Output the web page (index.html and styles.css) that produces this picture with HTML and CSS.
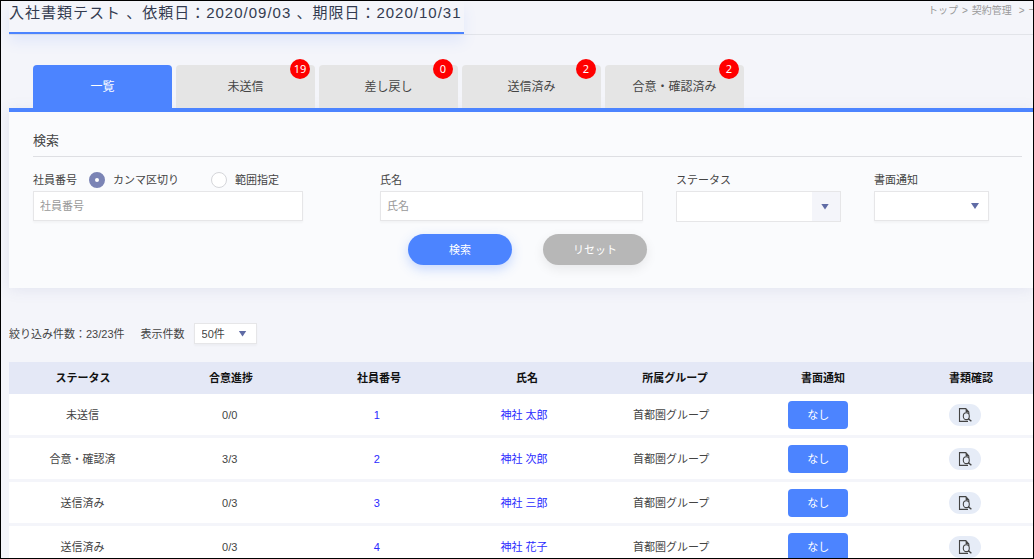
FILE: index.html
```html
<!DOCTYPE html>
<html lang="ja">
<head>
<meta charset="utf-8">
<title>入社書類テスト</title>
<link rel="stylesheet" href="styles.css">
</head>
<body>
<svg class="sprite" aria-hidden="true">
  <symbol id="doc-search" viewBox="0 0 14 14">
    <path d="M10 13.4H1.5V.6h6.3L10.8 4v2" fill="none" stroke="currentColor" stroke-width="1.1"/>
    <path d="M7.6.6l3.4 3.6H7.6z" fill="currentColor"/>
    <ellipse cx="8.3" cy="8.2" rx="3" ry="3.4" fill="none" stroke="currentColor" stroke-width="1.1"/>
    <path d="M10.2 10.6l3.2 2.6" stroke="currentColor" stroke-width="1.4"/>
  </symbol>
</svg>
<header class="page-header">
  <h1 class="page-title">入社書類テスト 、依頼日：2020/09/03 、期限日：2020/10/31</h1>
  <nav class="breadcrumb" aria-label="パンくず"><a href="#">トップ</a><span>&gt;</span><a href="#">契約管理</a><span class="deeper">&gt;</span><span>一</span></nav>
</header>
<main>
  <nav class="tabs" aria-label="表示切替">
    <button class="tab tab-active" type="button">一覧</button>
    <button class="tab" type="button">未送信<span class="badge">19</span></button>
    <button class="tab" type="button">差し戻し<span class="badge">0</span></button>
    <button class="tab" type="button">送信済み<span class="badge">2</span></button>
    <button class="tab" type="button">合意・確認済み<span class="badge">2</span></button>
  </nav>
  <form class="search-card">
    <h2 class="search-heading">検索</h2>
    <div class="fields">
      <div class="field field-number">
        <div class="label-row">
          <label for="emp-no">社員番号</label>
          <label class="choice"><input class="radio" type="radio" name="mode" checked>カンマ区切り</label>
          <label class="choice choice-range"><input class="radio" type="radio" name="mode">範囲指定</label>
        </div>
        <input class="control" id="emp-no" type="text" placeholder="社員番号">
      </div>
      <div class="field">
        <div class="label-row"><label for="emp-name">氏名</label></div>
        <input class="control" id="emp-name" type="text" placeholder="氏名">
      </div>
      <div class="field">
        <div class="label-row"><label for="status">ステータス</label></div>
        <div class="select select-multi"><select class="control" id="status"><option></option></select><span class="arrow"></span></div>
      </div>
      <div class="field">
        <div class="label-row"><label for="notice">書面通知</label></div>
        <div class="select"><select class="control" id="notice"><option></option></select><span class="arrow"></span></div>
      </div>
    </div>
    <div class="actions">
      <button class="pill pill-primary" type="submit">検索</button>
      <button class="pill pill-reset" type="reset">リセット</button>
    </div>
  </form>
  <div class="list-bar">
    <span>絞り込み件数：23/23件</span>
    <label class="page-size" for="size">表示件数</label>
    <div class="select select-small"><select class="control" id="size"><option>50件</option></select><span class="arrow"></span></div>
  </div>
  <table class="list">
    <thead>
      <tr><th>ステータス</th><th>合意進捗</th><th>社員番号</th><th>氏名</th><th>所属グループ</th><th>書面通知</th><th>書類確認</th></tr>
    </thead>
    <tbody>
      <tr><td>未送信</td><td>0/0</td><td><a href="#">1</a></td><td><a href="#">神社 太郎</a></td><td>首都圏グループ</td><td><button class="notice" type="button">なし</button></td><td><button class="doc" type="button" aria-label="書類確認"><svg class="doc-icon"><use href="#doc-search"/></svg></button></td></tr>
      <tr><td>合意・確認済</td><td>3/3</td><td><a href="#">2</a></td><td><a href="#">神社 次郎</a></td><td>首都圏グループ</td><td><button class="notice" type="button">なし</button></td><td><button class="doc" type="button" aria-label="書類確認"><svg class="doc-icon"><use href="#doc-search"/></svg></button></td></tr>
      <tr><td>送信済み</td><td>0/3</td><td><a href="#">3</a></td><td><a href="#">神社 三郎</a></td><td>首都圏グループ</td><td><button class="notice" type="button">なし</button></td><td><button class="doc" type="button" aria-label="書類確認"><svg class="doc-icon"><use href="#doc-search"/></svg></button></td></tr>
      <tr><td>送信済み</td><td>0/3</td><td><a href="#">4</a></td><td><a href="#">神社 花子</a></td><td>首都圏グループ</td><td><button class="notice" type="button">なし</button></td><td><button class="doc" type="button" aria-label="書類確認"><svg class="doc-icon"><use href="#doc-search"/></svg></button></td></tr>
    </tbody>
  </table>
</main>
</body>
</html>
```
FILE: styles.css
```css
* { box-sizing: border-box; }

body {
  margin: 0;
  height: 100vh;
  padding-left: 8px;
  overflow: hidden;
  border: 1px solid #000;
  background: #f4f5fa;
  color: #444;
  font: 11px/18px "Liberation Sans", "Noto Sans CJK JP", sans-serif;
}

button, input, select { font: inherit; color: inherit; margin: 0; }
button { padding: 0; border: 0; cursor: pointer; }
a { color: inherit; text-decoration: none; }

.sprite { display: none; }

.page-header {
  display: flex;
  justify-content: space-between;
  border-bottom: 1px solid #e2e4e9;
}

.page-title {
  margin: 0;
  padding: 2px 3px 9px 0;
  border-bottom: 2px solid #4c84ff;
  box-shadow: 0 8px 14px rgba(76, 132, 255, 0.1);
  color: #333b50;
  font-size: 15px;
  font-weight: 400;
  line-height: 20px;
  letter-spacing: 1px;
  white-space: nowrap;
}

.breadcrumb {
  display: flex;
  flex: 0 0 105px;
  gap: 4px;
  overflow: hidden;
  color: #999;
  font-size: 10px;
  line-height: 20px;
  white-space: nowrap;
}

.deeper { padding-left: 3px; }

.tabs {
  display: flex;
  gap: 4px;
  margin-top: 30px;
  padding-left: 24px;
}

.tab {
  position: relative;
  width: 139px;
  height: 43px;
  border-radius: 4px 4px 0 0;
  background: #e5e5e5;
  color: #444;
  font-size: 12px;
}

.tab-active { background: #4c84ff; color: #fff; }

.badge {
  position: absolute;
  top: -6px;
  right: 5px;
  width: 20px;
  border-radius: 10px;
  background: #f00;
  color: #fff;
  font: 11px/20px "Noto Sans", sans-serif;
}

.search-card {
  padding: 19px 11px 23px 24px;
  border-top: 4px solid #4c84ff;
  background: #fafbfd;
  box-shadow: 0 2px 14px rgba(80, 90, 160, 0.1);
}

.search-heading {
  margin: 0 0 14px;
  padding-bottom: 5px;
  border-bottom: 1px solid #dedfe3;
  font-size: 13px;
  font-weight: 400;
  line-height: 20px;
}

.fields {
  display: grid;
  grid-template-columns: 347fr 296fr 198fr 148fr;
}

.field { padding-right: 33px; }
.field-number { padding-right: 77px; }

.label-row {
  display: flex;
  align-items: center;
  height: 18px;
  margin-bottom: 2px;
  white-space: nowrap;
}

.choice {
  display: flex;
  align-items: center;
  gap: 8px;
  margin-left: 12px;
}

.choice-range { margin-left: 32px; }

.radio {
  appearance: none;
  width: 16px;
  height: 16px;
  border: 1px solid #d5d6da;
  border-radius: 50%;
  background: #fff;
}

.radio:checked {
  border: 6px solid #7b84b5;
}

.control {
  appearance: none;
  display: block;
  width: 100%;
  height: 30px;
  padding: 0 6px;
  border: 1px solid #e6e6e8;
  border-radius: 0;
  outline: 0;
  background: #fff;
  box-shadow: 0 2px 2px rgba(0, 0, 0, 0.03);
}

.control::placeholder { color: #999; opacity: 1; }

.select { display: grid; }
.select > * { grid-area: 1 / 1; }

.arrow {
  place-self: center end;
  width: 8px;
  height: 6px;
  margin-right: 10px;
  background: #5f6ba5;
  clip-path: polygon(0 0, 100% 0, 50% 100%);
  pointer-events: none;
}

.select-multi .control {
  height: 31px;
  background: linear-gradient(to left, #f4f5fa 28px, #fff 28px);
  box-shadow: none;
}

.select-multi .arrow { margin-right: 12px; }

.actions {
  display: flex;
  justify-content: center;
  gap: 31px;
  margin-top: 12px;
}

.pill {
  width: 104px;
  height: 31px;
  border-radius: 16px;
  color: #fff;
}

.pill-primary {
  background: #4c84ff;
  box-shadow: 0 4px 12px rgba(76, 132, 255, 0.3);
}

.pill-reset {
  background: #b7b7b7;
  box-shadow: 0 4px 12px rgba(0, 0, 0, 0.08);
}

.list-bar {
  display: flex;
  align-items: center;
  margin: 35px 0 18px;
}

.page-size { margin: 0 9px 0 16px; }
.select-small { width: 63px; }
.select-small .control { height: 21px; padding-left: 7px; }

.list { display: block; }
.list thead, .list tbody { display: block; }
.list thead { width: calc(100% + 12px); }
.list tbody { width: calc(100% + 6px); }

.list tr {
  display: grid;
  grid-template-columns: repeat(7, 1fr);
  align-items: center;
  height: 41px;
  margin-bottom: 3px;
  background: #fff;
}

.list thead tr {
  height: 32px;
  margin-bottom: 0;
  background: #e4e8f6;
}

.list th { padding: 0; color: #111; }
.list td { padding: 0; text-align: center; }
.list a { color: #2a2aff; }

.notice {
  width: 60px;
  height: 28px;
  border-radius: 4px;
  background: #4c84ff;
  color: #fff;
}

.doc {
  display: grid;
  place-items: center;
  width: 32px;
  height: 22px;
  margin: 0 auto;
  border-radius: 11px;
  background: #e6ecf7;
  color: #444;
}

.doc-icon { width: 14px; height: 14px; }
```
